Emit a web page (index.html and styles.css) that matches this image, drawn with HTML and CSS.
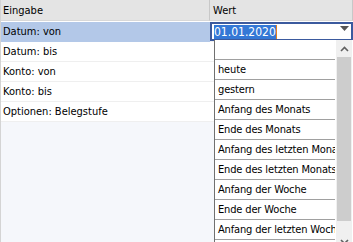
FILE: index.html
```html
<!DOCTYPE html>
<html lang="de">
<head>
  <meta charset="UTF-8">
  <title>Parameter</title>
  <link rel="stylesheet" href="styles.css">
</head>
<body>

<div class="grid">
  <div class="head">
    <div class="hcell col-in">Eingabe</div>
    <div class="hcell col-val">Wert</div>
  </div>

  <div class="rows">
    <div class="row">
      <div class="cell col-in selected">Datum: von</div>
      <div class="cell col-val">
        <div class="editor">
          <span class="sel">01.01.2020</span><span class="caret"></span>
          <span class="drop-btn">
            <svg width="9" height="5" viewBox="0 0 9 5"><path d="M0 0h9L4.5 5z" fill="#555"/></svg>
          </span>
        </div>
      </div>
    </div>
    <div class="row">
      <div class="cell col-in">Datum: bis</div>
      <div class="cell col-val"></div>
    </div>
    <div class="row">
      <div class="cell col-in">Konto: von</div>
      <div class="cell col-val"></div>
    </div>
    <div class="row">
      <div class="cell col-in">Konto: bis</div>
      <div class="cell col-val"></div>
    </div>
    <div class="row">
      <div class="cell col-in">Optionen: Belegstufe</div>
      <div class="cell col-val"></div>
    </div>
  </div>

  <!-- popup list of the date editor -->
  <div class="popup">
    <div class="items">
      <div class="item">&nbsp;</div>
      <div class="item">heute</div>
      <div class="item">gestern</div>
      <div class="item">Anfang des Monats</div>
      <div class="item">Ende des Monats</div>
      <div class="item">Anfang des letzten Monats</div>
      <div class="item">Ende des letzten Monats</div>
      <div class="item">Anfang der Woche</div>
      <div class="item">Ende der Woche</div>
      <div class="item">Anfang der letzten Woche</div>
    </div>
    <div class="scrollbar">
      <div class="arrow">
        <svg width="9" height="6" viewBox="0 0 9 6"><path d="M1 5l3.5-3.5L8 5" fill="none" stroke="#606060" stroke-width="1.6"/></svg>
      </div>
      <div class="thumb"></div>
      <div class="arrow">
        <svg width="9" height="6" viewBox="0 0 9 6"><path d="M1 1l3.5 3.5L8 1" fill="none" stroke="#606060" stroke-width="1.6"/></svg>
      </div>
    </div>
  </div>
</div>

</body>
</html>
```

FILE: styles.css
```css
body {
  margin: 0;
  font-family: "DejaVu Sans Condensed", "DejaVu Sans", sans-serif;
  font-size: 11px;
  color: #000;
  background: #f5f7fb;
}

.grid {
  position: relative;
  width: 353px;
  height: 242px;
  overflow: hidden;
  border-left: 1px solid #d4d4d4;
  box-sizing: border-box;
  background: #f5f7fb;
}

.head {
  display: flex;
  height: 21px;
  background: #e4e4e4;
  border-bottom: 1px solid #fff;
}

.hcell {
  display: flex;
  align-items: center;
  padding: 1px 0 0 2px;
  border-right: 1px solid #c8c8c8;
  border-bottom: 1px solid #d8d8d8;
}

.col-in {
  width: 209px;
  box-sizing: border-box;
}

.col-val {
  flex: 1;
  box-sizing: border-box;
}

.hcell.col-val {
  padding-left: 3px;
}

.row {
  display: flex;
  height: 20px;
  background: #fff;
}

.cell {
  display: flex;
  align-items: center;
  padding: 0 0 1px 2px;
  border-bottom: 1px solid #efefef;
}

.cell.selected {
  background: #b3c8e8;
  border-bottom-color: #b3c8e8;
}

.cell.col-val {
  padding: 0;
}

.editor {
  position: relative;
  display: flex;
  align-items: center;
  width: 100%;
  height: 19px;
  box-sizing: border-box;
  border: 2px solid #3b5a9e;
  background: #fff;
  padding-left: 2px;
  font-size: 12px;
}

.sel {
  background: #3478d6;
  color: #fff;
  line-height: 14px;
}

.caret {
  width: 1px;
  height: 14px;
  background: #e08020;
}

.drop-btn {
  position: absolute;
  right: 1px;
  top: 2px;
  width: 12px;
  height: 12px;
  display: flex;
  justify-content: center;
  align-items: flex-start;
}

.popup {
  position: absolute;
  left: 213px;
  top: 40px;
  width: 138px;
  height: 210px;
  display: flex;
  background: #fff;
  border-left: 1px solid #707070;
  border-right: 1px solid #707070;
}

.items {
  width: 120px;
}

.item {
  height: 19px;
  line-height: 19px;
  padding-left: 3px;
  border-bottom: 1px solid #a0a0a0;
  white-space: nowrap;
  overflow: hidden;
  letter-spacing: -0.15px;
}

.scrollbar {
  width: 16px;
  margin-left: 1px;
  display: flex;
  flex-direction: column;
  background: #f0f0f0;
}

.arrow {
  height: 17px;
  display: flex;
  justify-content: center;
  align-items: center;
}

.thumb {
  height: 164px;
  margin: 0 1px 12px;
  background: #cdcdcd;
}
```
